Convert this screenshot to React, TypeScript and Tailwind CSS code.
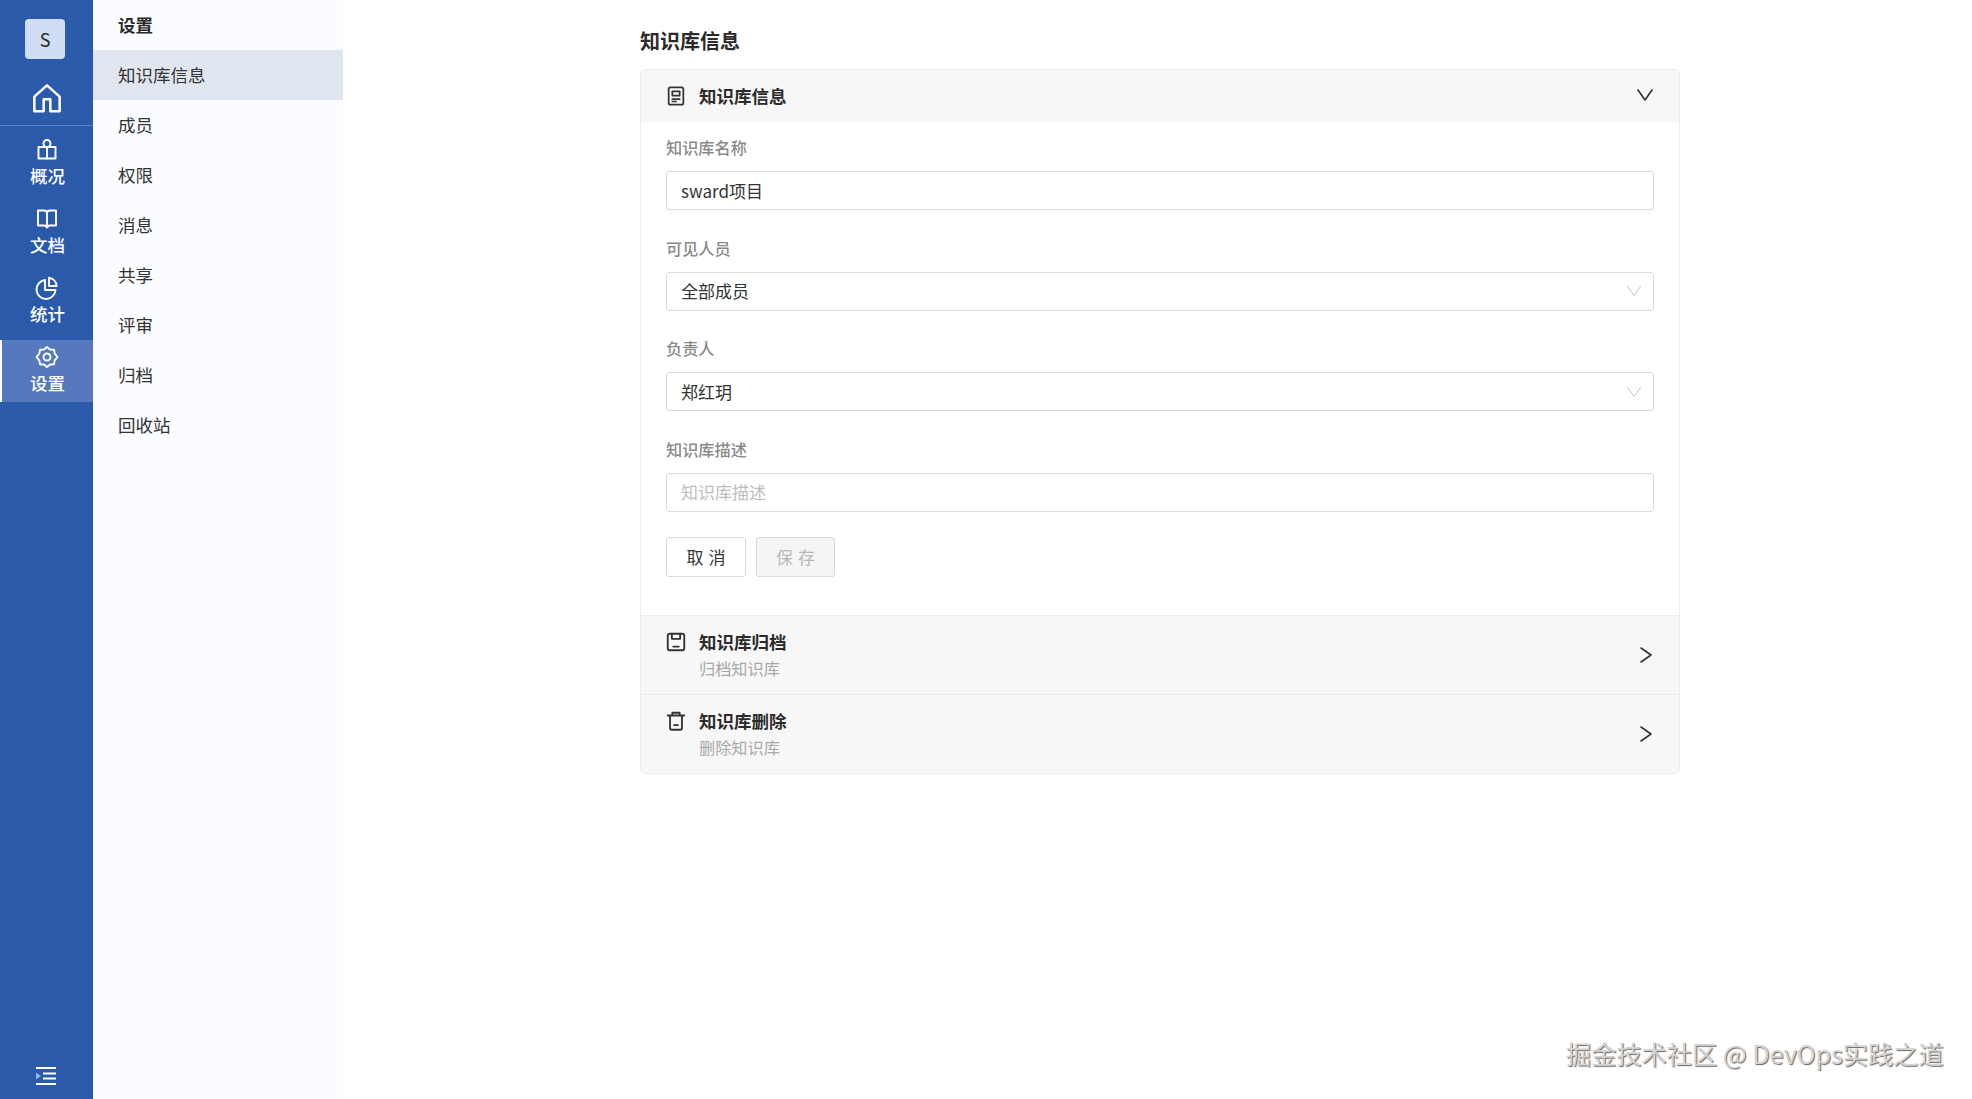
import React from "react";

const Ico = ({ className, children, vb = "0 0 24 24", sw = 2 }: { className: string; children: React.ReactNode; vb?: string; sw?: number }) => (
  <svg viewBox={vb} fill="none" stroke="currentColor" strokeWidth={sw} strokeLinecap="round" strokeLinejoin="round" className={className}>
    {children}
  </svg>
);

const navIcons: Record<string, React.ReactNode> = {
  概况: (
    <>
      <circle cx="12" cy="5.5" r="3.5" />
      <path d="M3.500 9H20.500V20.500H3.500Z" />
      <path d="M12 9v11.500" />
    </>
  ),
  文档: (
    <>
      <path d="M3 3.500h6c1.500 0 3 1 3 2.500 0-1.500 1.500-2.500 3-2.500h6V18.500h-7l-2 2-2-2H3Z" />
      <path d="M12 6v12.500" />
    </>
  ),
  统计: (
    <>
      <path d="M10 4A9.500 9.500 0 1 0 20.500 14H10Z" />
      <path d="M14 1.800c4 .5 7.200 3.700 7.700 8.200H14Z" />
    </>
  ),
  设置: (
    <>
      <path d="m12 2 3 2.500 4 .3.700 3.900 2.800 3.300-2.800 3.300-.7 3.900-4 .3L12 22l-3-2.500-4-.3-.7-3.900L1.500 12l2.800-3.300.7-3.900 4-.3Z" />
      <circle cx="12" cy="12" r="3.500" />
    </>
  ),
};

function NavItem({ label, active }: { label: string; active?: boolean }) {
  return (
    <div className={`h-[62px] flex flex-col items-center pt-[6px] border-l-2 ${active ? "bg-[#5679bd] border-white" : "border-transparent"}`}>
      <Ico className="w-[24px] h-[24px] text-white shrink-0 mt-[-1px] ml-[-1px]" sw={1.9}>{navIcons[label]}</Ico>
      <span className="text-[17.5px] leading-[24px] font-medium text-white mt-[2px]">{label}</span>
    </div>
  );
}

function Field({ label, children }: { label: string; children: React.ReactNode }) {
  return (
    <div className="flex flex-col">
      <div className="h-[20px] leading-[20px] text-[16.2px] font-medium text-[#8a8a8a]">{label}</div>
      {children}
    </div>
  );
}

function Box({ text, placeholder, select }: { text: string; placeholder?: boolean; select?: boolean }) {
  return (
    <div className="h-[39px] mt-[14px] pl-[14px] pr-[11px] flex items-center justify-between border border-[#d9d9d9] rounded-[3px] bg-white">
      <span className={`text-[17px] ${placeholder ? "text-[#bdbdbd]" : "text-[#333333]"}`}>{text}</span>
      {select && (
        <Ico className="w-[16px] h-[16px] text-[#c4c4c4]" vb="0 0 16 16" sw={1}>
          <path d="M1.500 3.500 8 12.500l6.500-9" />
        </Ico>
      )}
    </div>
  );
}

function Row({ title, sub, icon }: { title: string; sub: string; icon: React.ReactNode }) {
  return (
    <div className="h-[79px] bg-[#f7f7f7] border-t border-[#ececec] pl-[25px] pr-[26px] flex items-center justify-between">
      <div className="flex items-start">
        <Ico className="w-[22px] h-[22px] text-[#333] mt-[2px] ml-[-1px] mr-[12px]" sw={2}>{icon}</Ico>
        <div className="flex flex-col">
          <span className="text-[17.5px] leading-[26px] font-bold text-[#2b2b2b]">{title}</span>
          <span className="text-[16.2px] leading-[26px] text-[#a8a8a8]">{sub}</span>
        </div>
      </div>
      <Ico className="w-[14px] h-[20px] text-[#333]" vb="0 0 14 20" sw={1.600}>
        <path d="M2 3 12 10 2 17" />
      </Ico>
    </div>
  );
}

export default function App() {
  const menu = ["成员", "权限", "消息", "共享", "评审", "归档", "回收站"];
  return (
    <div className="relative w-full h-[1099px] flex bg-white overflow-hidden [font-family:'Noto_Sans_CJK_SC','Open_Sans',sans-serif]">
      {/* Primary sidebar */}
      <aside className="w-[93px] shrink-0 bg-[#2c5aab] flex flex-col">
        <div className="pt-[19px] pl-[25px]">
          <div className="w-[40px] h-[40px] rounded-[4px] bg-[#d0ddf3] flex items-center justify-center text-[18px] text-[#2b2b2b]">S</div>
        </div>
        <div className="h-[67px] border-b border-[#5b80c2] flex justify-center pt-[23px] pl-[1px]">
          <Ico className="w-[32px] h-[32px] text-white" sw={1.900}>
            <path d="M2.500 11 12 2.500l9.500 8.500v11h-7v-9h-5v9h-7Z" />
          </Ico>
        </div>
        <div className="flex flex-col gap-[7px] pt-[7px]">
          <NavItem label="概况" />
          <NavItem label="文档" />
          <NavItem label="统计" />
          <NavItem label="设置" active />
        </div>
        <div className="mt-auto h-[59px] flex items-start justify-center pt-[27px] pr-[2px]">
          <svg viewBox="0 0 20 18" className="w-[20px] h-[18px] text-white" fill="none" stroke="currentColor" strokeWidth="2">
            <path d="M0 1h20M7 6.500h13M7 11.500h13M0 17h20" />
            <path d="M0 5.500 5 9l-5 3.500Z" fill="#8db4ee" stroke="none" />
          </svg>
        </div>
      </aside>

      {/* Secondary sidebar */}
      <nav className="w-[250px] shrink-0 bg-[#fbfcff] flex flex-col">
        <div className="h-[50px] pl-[25px] flex items-center text-[17.5px] font-bold text-[#2b2b2b]">设置</div>
        <div className="h-[50px] pl-[25px] flex items-center text-[17.5px] text-[#333] bg-[#e0e6ef]">知识库信息</div>
        {menu.map((m) => (
          <div key={m} className="h-[50px] pl-[25px] flex items-center text-[17.5px] text-[#333]">{m}</div>
        ))}
      </nav>

      {/* Main */}
      <main className="flex-1 pl-[297px]">
        <div className="w-[1040px]">
          <h1 className="h-[69px] pt-[26px] leading-[30px] text-[20px] font-bold text-[#2b2b2b]">知识库信息</h1>
          <section className="rounded-[5px] border border-[#ededed] overflow-hidden">
            <div className="h-[52px] bg-[#f7f7f7] pl-[25px] pr-[26px] flex items-center justify-between">
              <div className="flex items-center">
                <Ico className="w-[22px] h-[22px] text-[#333] ml-[-1px] mr-[12px]" sw={1.9}>
                  <rect x="4" y="2.500" width="16" height="19" rx="2" />
                  <path d="M8 7h8v4.500H8ZM8 15.500h8M8 18h4" />
                </Ico>
                <span className="text-[17.5px] font-bold text-[#2b2b2b]">知识库信息</span>
              </div>
              <Ico className="w-[16px] h-[12px] text-[#333] mt-[-2px]" vb="0 0 16 12" sw={1.600}>
                <path d="M1 1 8 11l7-10" />
              </Ico>
            </div>
            <div className="px-[25px] pt-[15px] pb-[38px] flex flex-col gap-[27.5px]">
              <Field label="知识库名称"><Box text="sward项目" /></Field>
              <Field label="可见人员"><Box text="全部成员" select /></Field>
              <Field label="负责人"><Box text="郑红玥" select /></Field>
              <Field label="知识库描述"><Box text="知识库描述" placeholder /></Field>
              <div className="flex gap-[10px] mt-[-2px]">
                <div className="w-[80px] h-[40px] rounded-[3px] border border-[#d9d9d9] flex items-center justify-center text-[17px] text-[#333] tracking-[5px] pl-[5px]">取消</div>
                <div className="w-[79px] h-[40px] rounded-[3px] border border-[#d9d9d9] bg-[#f5f5f5] flex items-center justify-center text-[17px] text-[#b8b8b8] tracking-[5px] pl-[5px]">保存</div>
              </div>
            </div>
            <Row
              title="知识库归档"
              sub="归档知识库"
              icon={
                <>
                  <rect x="3" y="3" width="18" height="18" rx="2" />
                  <path d="M7.500 3v5.500h9V3M9 17h6" />
                </>
              }
            />
            <Row
              title="知识库删除"
              sub="删除知识库"
              icon={
                <path d="M3 6h18M8 6V3h8v3M5.500 6v14a1.500 1.500 0 0 0 1.500 1.500h10a1.500 1.500 0 0 0 1.500-1.500V6M10 16.500h4" />
              }
            />
          </section>
        </div>
      </main>

      {/* Watermark */}
      <div className="absolute left-[1566px] top-[1035px] text-[25.2px] leading-[36px] text-[#d4d4d4] whitespace-nowrap [text-shadow:1px_1px_1px_#666]">
        掘金技术社区 @ DevOps实践之道
      </div>
    </div>
  );
}
